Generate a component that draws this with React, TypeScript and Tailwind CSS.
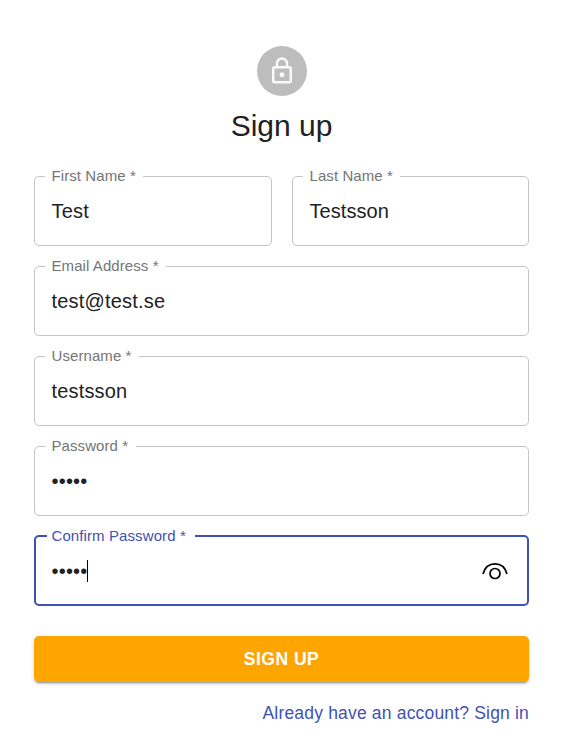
type FieldProps = {
  label: string;
  value: string;
  labelClass: string;
  valueClass?: string;
};

function Field({ label, value, labelClass, valueClass = "" }: FieldProps) {
  return (
    <fieldset className="h-[79px] min-w-0 rounded-[5px] border border-[#c4c4c4] pl-[10px]">
      <legend className={`h-[18px] whitespace-nowrap pl-[6.5px] text-[15px] leading-[18px] text-[#757575] ${labelClass}`}>
        {label}
      </legend>
      <div className={`pl-[6.5px] pt-[14px] text-[20px] leading-[24px] text-[#212121] ${valueClass}`}>{value}</div>
    </fieldset>
  );
}

export default function App() {
  return (
    <main className="h-[740px] w-[563px] overflow-hidden bg-white pl-[34px] pr-[34px] pt-[46px] font-['Liberation_Sans',Arial,sans-serif]">
      <header className="flex h-[121px] flex-col items-center">
        <div className="flex size-[50px] items-center justify-center rounded-full bg-[#bdbdbd]">
          <svg width="30" height="30" viewBox="0 0 24 24" fill="#fafafa">
            <path d="M12 17c1.1 0 2-.9 2-2s-.9-2-2-2-2 .9-2 2 .9 2 2 2zm6-9h-1V6c0-2.76-2.24-5-5-5S7 3.24 7 6v2H6c-1.1 0-2 .9-2 2v10c0 1.1.9 2 2 2h12c1.1 0 2-.9 2-2V10c0-1.1-.9-2-2-2zM8.9 6c0-1.71 1.39-3.1 3.1-3.1s3.1 1.39 3.1 3.1v2H8.9V6zM18 20H6V10h12v10z" />
          </svg>
        </div>
        <h1 className="mt-[10px] text-[30px] leading-[40px] text-[#212121]">Sign up</h1>
      </header>

      <form className="flex flex-col gap-[11px]">
        <div className="grid grid-cols-[238px_237px] gap-5">
          <Field label="First Name *" value="Test" labelClass="w-[98px] tracking-[0.08px]" valueClass="tracking-[0.2px]" />
          <Field label="Last Name *" value="Testsson" labelClass="w-[97px] tracking-[0.08px]" valueClass="tracking-[0.06px]" />
        </div>
        <Field label="Email Address *" value="test@test.se" labelClass="w-[121px] tracking-[0.08px]" valueClass="tracking-[0.2px]" />
        <Field label="Username *" value="testsson" labelClass="w-[94px] tracking-[0.08px]" valueClass="tracking-[0.16px]" />
        <Field label="Password *" value="•••••" labelClass="w-[91px] tracking-[0.08px]" valueClass="tracking-[0.2px]" />
        <fieldset className="h-[79px] min-w-0 rounded-[5px] border-2 border-[#3f51b5] pl-[11px]">
          <legend className="h-[18px] w-[148px] whitespace-nowrap pl-[4.5px] text-[15px] leading-[18px] tracking-[0.1px] text-[#3f51b5]">
            Confirm Password *
          </legend>
          <div className="flex items-start pl-[4.5px] pr-[19px] pt-[14px]">
            <span className="w-[35.5px] whitespace-nowrap text-[20px] leading-[24px] tracking-[0.2px] text-[#212121]">•••••</span>
            <span className="mt-px h-[22px] w-px bg-black" />
            <svg className="ml-auto mt-[2px]" width="26" height="20" viewBox="0 0 26 20" fill="none" stroke="#000" strokeWidth="1.7">
              <path d="M1 13C2.7 6.7 7.3 2.900 13 2.900S23.300 6.700 25 13" />
              <circle cx="13" cy="12.5" r="5" />
            </svg>
          </div>
        </fieldset>
        <button
          type="button"
          className="mt-[19px] h-[46px] rounded-[5px] bg-[#ffa500] text-[17.5px] font-bold leading-[46px] tracking-[0.5px] text-white shadow-[0_3px_1px_-2px_rgba(0,0,0,0.2),0_2px_2px_0_rgba(0,0,0,0.14),0_1px_5px_0_rgba(0,0,0,0.12)]"
        >
          SIGN UP
        </button>
      </form>
      <div className="mt-[19px] flex justify-end">
        <a className="whitespace-nowrap text-[17.5px] leading-[25px] tracking-[0.18px] text-[#3f51b5]">
          Already have an account? Sign in
        </a>
      </div>
    </main>
  );
}
